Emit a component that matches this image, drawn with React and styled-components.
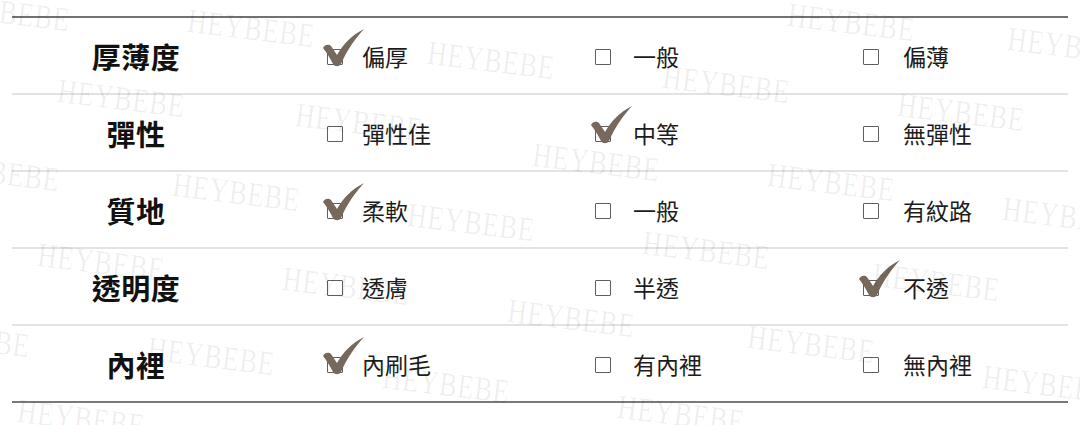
import React from 'react';
import styled, { createGlobalStyle } from 'styled-components';

const GlobalStyle = createGlobalStyle`
  html, body {
    margin: 0;
    padding: 0;
    background: #ffffff;
  }
  body {
    font-family: "Noto Sans CJK TC", "Noto Sans", sans-serif;
  }
`;

const rows = [
  { label: '厚薄度', options: ['偏厚', '一般', '偏薄'], checked: 0 },
  { label: '彈性', options: ['彈性佳', '中等', '無彈性'], checked: 1 },
  { label: '質地', options: ['柔軟', '一般', '有紋路'], checked: 0 },
  { label: '透明度', options: ['透膚', '半透', '不透'], checked: 2 },
  { label: '內裡', options: ['內刷毛', '有內裡', '無內裡'], checked: 0 },
];

// watermark spots, they sit on the picture like a stamp
const marks = [
  [-55, -12], [190, 4], [430, 36], [790, -2], [1010, 22],
  [60, 74], [665, 60], [298, 98], [900, 88],
  [-65, 148], [175, 168], [535, 138], [770, 158],
  [410, 198], [1005, 192], [40, 238], [645, 226],
  [285, 262], [875, 258], [510, 294], [-95, 314],
  [150, 332], [750, 320], [385, 360], [985, 360],
  [620, 390], [20, 394],
];

const Check = () => (
  <CheckMark viewBox="0 0 43 39" width="43" height="39">
    <path
      d="M1,19 C3,15 7,15 9,17 L15,26 C21,15 30,6 42,0 C33,10 25,21 19,35 C17,38 13,38 11,35 C8,29 5,24 1,19 Z"
      fill="#76685a"
    />
  </CheckMark>
);

const Option = ({ text, checked, $gap }) => (
  <OptionCell $gap={$gap}>
    <Box>{checked && <Check />}</Box>
    <OptionText>{text}</OptionText>
  </OptionCell>
);

const gaps = [19, 22, 24];

const App = () => {
  return (
    <Page>
      <GlobalStyle />
      <Table>
        {rows.map((r, i) => (
          <Row key={r.label} $last={i === rows.length - 1}>
            <Label>{r.label}</Label>
            {r.options.map((o, j) => (
              <Option key={o + j} text={o} checked={r.checked === j} $gap={gaps[j]} />
            ))}
          </Row>
        ))}
      </Table>
      <Watermarks>
        {marks.map(([x, y], i) => (
          <Mark key={i} $x={x} $y={y}>HEYBEBE</Mark>
        ))}
      </Watermarks>
    </Page>
  );
};

export default App;

const Page = styled.div`
  position: relative;
  width: 1080px;
  height: 425px;
  overflow: hidden;
  background: #ffffff;
  padding-top: 16px;
  box-sizing: border-box;
`;

const Table = styled.div`
  margin: 0 12px;
  border-top: 2px solid #727272;
`;

const Row = styled.div`
  display: grid;
  grid-template-columns: 248px repeat(3, 268px);
  align-items: center;
  height: 75px;
  border-bottom: 2px solid ${p => (p.$last ? '#7a7a7a' : '#e3e3e3')};
`;

const Label = styled.div`
  text-align: center;
  font-size: 29px;
  font-weight: 700;
  color: #111111;
  letter-spacing: 0.5px;
`;

const OptionCell = styled.div`
  display: flex;
  align-items: center;
  gap: ${p => p.$gap}px;
  padding-left: 67px;
`;

const Box = styled.span`
  position: relative;
  width: 16px;
  height: 16px;
  box-sizing: border-box;
  border: 1.5px solid #5e5e5e;
  border-radius: 1px;
  flex-shrink: 0;
  margin-top: 3px;
`;

const CheckMark = styled.svg`
  position: absolute;
  left: -6px;
  top: -21px;
`;

const OptionText = styled.span`
  font-size: 23px;
  font-weight: 400;
  color: #1c1c1c;
`;

const Watermarks = styled.div`
  position: absolute;
  inset: 0;
  pointer-events: none;
`;

const Mark = styled.span`
  position: absolute;
  left: ${p => p.$x}px;
  top: ${p => p.$y}px;
  font-family: "Liberation Serif", serif;
  font-size: 34px;
  line-height: 1;
  letter-spacing: 1px;
  color: rgba(0, 0, 0, 0.07);
  transform: rotate(7deg) scaleX(0.78);
  transform-origin: left top;
  white-space: nowrap;
`;
